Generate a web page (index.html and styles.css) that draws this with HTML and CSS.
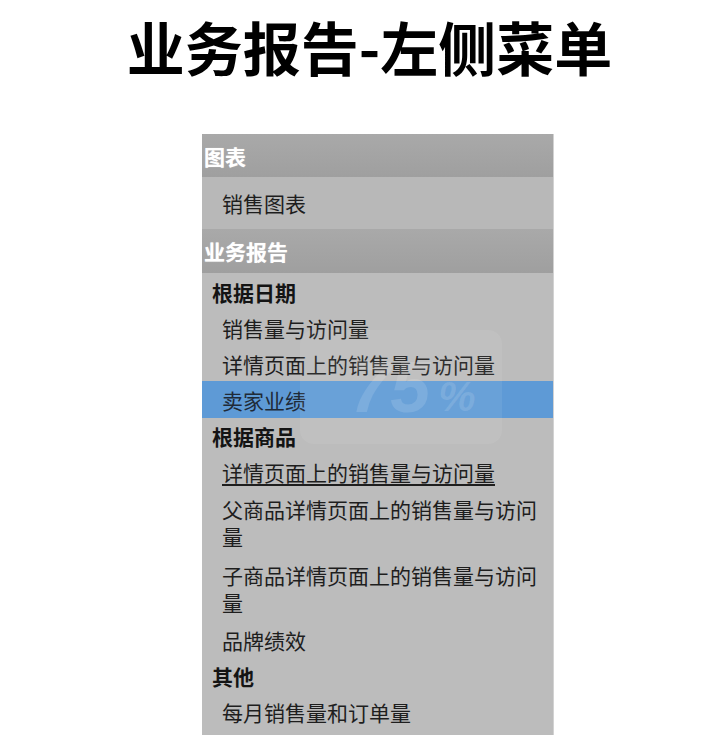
FILE: index.html
```html
<!DOCTYPE html>
<html lang="zh-CN">
<head>
<meta charset="utf-8">
<title>业务报告-左侧菜单</title>
<link rel="stylesheet" href="styles.css">
</head>
<body>
<h1 class="title">业务报告-左侧菜单</h1>
<nav class="menu">
  <div class="menu-head menu-head--first">图表</div>
  <div class="menu-boxed">销售图表</div>
  <div class="menu-head">业务报告</div>
  <div class="menu-body">
    <div class="group">根据日期</div>
    <div class="link">销售量与访问量</div>
    <div class="link">详情页面上的销售量与访问量</div>
    <div class="link link--active">卖家业绩</div>
    <div class="group">根据商品</div>
    <div class="link link--underline">详情页面上的销售量与访问量</div>
    <div class="link link--wrap">父商品详情页面上的销售量与访问量</div>
    <div class="link link--wrap">子商品详情页面上的销售量与访问量</div>
    <div class="link">品牌绩效</div>
    <div class="group">其他</div>
    <div class="link">每月销售量和订单量</div>
  </div>
  <div class="loading" aria-hidden="true"><span class="loading-num">75</span><span class="loading-pct">%</span></div>
</nav>
</body>
</html>
```

FILE: styles.css
```css
html, body {
  margin: 0;
  padding: 0;
  background: #ffffff;
}

body {
  font-family: "Noto Sans CJK SC", "Noto Sans", sans-serif;
  color: #222;
}

.title {
  margin: 0;
  height: 134px;
  padding: 0 0 0 19px;
  box-sizing: border-box;
  text-align: center;
  font-size: 58px;
  line-height: 92px;
  font-weight: 700;
  color: #000;
}

.menu {
  position: relative;
  margin-left: 202px;
  width: 352px;
  background: #bcbcbc;
  border-right: 1px solid #d2d2d2;
  box-sizing: border-box;
  font-size: 21px;
}

.menu-head {
  height: 44px;
  padding-left: 2px;
  display: flex;
  align-items: center;
  background: linear-gradient(#a9a9a9, #9f9f9f);
  color: #ffffff;
  font-weight: 700;
  text-shadow: 0 0 1px rgba(255, 255, 255, 0.6);
}

.menu-head--first {
  height: 43px;
}

.menu-boxed {
  height: 52px;
  padding-left: 20px;
  display: flex;
  align-items: center;
  background: #b8b8b8;
  color: #1e1e1e;
}

.menu-body {
  display: flex;
  flex-direction: column;
  padding: 1px 0 5px;
  background: #bcbcbc;
}

.group {
  padding: 5px 10px 5px 10px;
  line-height: 26px;
  font-weight: 700;
  color: #141414;
}

.link {
  padding: 5px 10px 5px 20px;
  line-height: 26px;
  color: #1e1e1e;
}

.link--active {
  margin-top: -1px;
  padding-top: 6px;
  background: #5e9ad6;
  color: #1f2a38;
}

.link--underline {
  text-decoration: underline;
  text-underline-offset: 3px;
}

.link--wrap {
  padding-top: 6px;
  padding-bottom: 6px;
  line-height: 27px;
}

.loading {
  position: absolute;
  left: 98px;
  top: 196px;
  width: 202px;
  height: 114px;
  border-radius: 14px;
  background: rgba(255, 255, 255, 0.07);
  display: flex;
  align-items: center;
  justify-content: center;
  padding-left: 24px;
  box-sizing: border-box;
  color: rgba(255, 255, 255, 0.13);
  font-family: "Liberation Sans", Arial, sans-serif;
  font-weight: 700;
  font-style: italic;
  pointer-events: none;
}

.loading-num {
  font-size: 72px;
  line-height: 1;
}

.loading-pct {
  font-size: 42px;
  line-height: 1;
  margin-left: 8px;
  margin-top: 20px;
}
```
